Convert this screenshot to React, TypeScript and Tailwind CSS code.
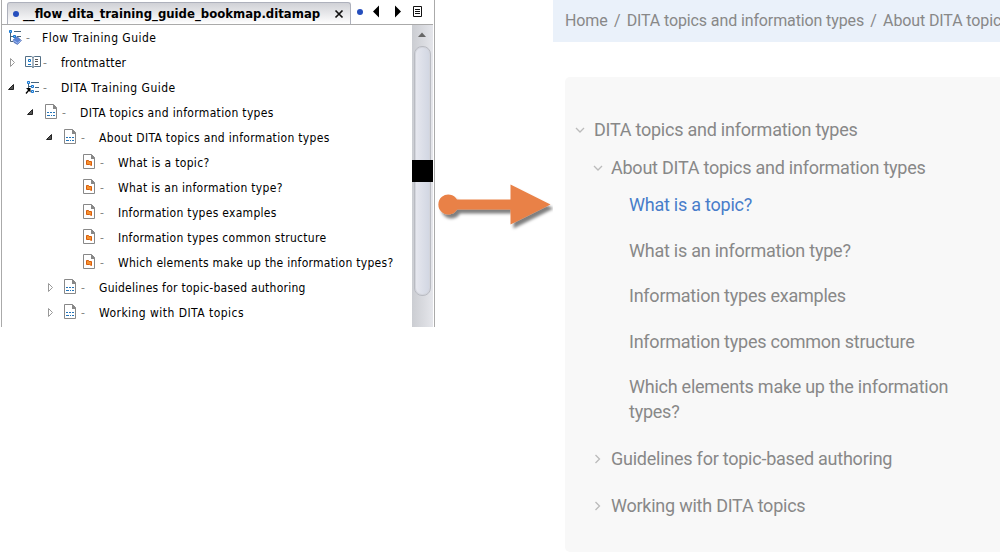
import React from "react";

type Kind = "map" | "book" | "ref" | "section" | "topic";
type Row = { label: string; indent: string; kind: Kind; state?: "open" | "closed"; track: string };

const rows: Row[] = [
  { label: "Flow Training Guide", indent: "pl-[6px]", kind: "map", track: "tracking-[0.46px]" },
  { label: "frontmatter", indent: "pl-[4px]", kind: "book", state: "closed", track: "tracking-[0.27px]" },
  { label: "DITA Training Guide", indent: "pl-[4px]", kind: "ref", state: "open", track: "tracking-[0.48px]" },
  { label: "DITA topics and information types", indent: "pl-[23px]", kind: "section", state: "open", track: "tracking-[0.33px]" },
  { label: "About DITA topics and information types", indent: "pl-[42px]", kind: "section", state: "open", track: "tracking-[0.32px]" },
  { label: "What is a topic?", indent: "pl-[80px]", kind: "topic", track: "tracking-[0.33px]" },
  { label: "What is an information type?", indent: "pl-[80px]", kind: "topic", track: "tracking-[0.3px]" },
  { label: "Information types examples", indent: "pl-[80px]", kind: "topic", track: "tracking-[0.29px]" },
  { label: "Information types common structure", indent: "pl-[80px]", kind: "topic", track: "tracking-[0.29px]" },
  { label: "Which elements make up the information types?", indent: "pl-[80px]", kind: "topic", track: "tracking-[0.28px]" },
  { label: "Guidelines for topic-based authoring", indent: "pl-[42px]", kind: "section", state: "closed", track: "tracking-[0.26px]" },
  { label: "Working with DITA topics", indent: "pl-[42px]", kind: "section", state: "closed", track: "tracking-[0.46px]" },
];

function Toggle({ open }: { open: boolean }) {
  return (
    <svg width="19" height="17" viewBox="0 0 19 17" className="shrink-0">
      {open ? (
        <path d="M7.5 5.5V10.5H2.5Z" fill="#555" stroke="#222" strokeWidth="1" />
      ) : (
        <path d="M4.5 4.5V12.5L8.5 8.5Z" fill="#fff" stroke="#999" />
      )}
    </svg>
  );
}

function NodeIcon({ kind }: { kind: Kind }) {
  if (kind === "section" || kind === "topic")
    return (
      <svg width="16" height="17" viewBox="0 0 16 17" className="shrink-0">
        <path d="M1.5 .5H9.5L12.5 3.5V14.5H1.5Z" fill="#fff" stroke="#888" />
        <path d="M9 0L13 4V5H9Z" fill="#888" />
        {kind === "section" ? (
          <path d="M3 8.5H5M6 8.5H8M9 8.5H11M3 11.5H6M7 11.5H8M9 11.5H11" stroke="#2474b8" />
        ) : (
          <path d="M4.5 6.5H6.5L7 7.5H9.5V11.5L7.5 10.5H4.5Z" fill="#f59331" stroke="#d95d0c" />
        )}
      </svg>
    );
  if (kind === "book")
    return (
      <svg width="16" height="17" viewBox="0 0 16 17" className="shrink-0">
        <path d="M.5 2.5H6.5L8 3.5L9.5 2.5H15.5V12.5H9.5L8 13.5L6.5 12.5H.5ZM8 3.5V13.5" fill="#fff" stroke="#536f86" />
        <path d="M3.5 5.5H5.5V7.5H3.5ZM3 10.5H6" fill="none" stroke="#1476c7" />
        <path d="M10 5.5H13M10 7.5H13M10 10.5H13" stroke="#555" />
      </svg>
    );
  if (kind === "map")
    return (
      <svg width="16" height="17" viewBox="0 0 16 17" className="shrink-0">
        <path d="M2.5 4V12.5H5M2.5 7.5H5M6 2.5H13M9 7.5H13" fill="none" stroke="#46637b" />
        <path d="M1.5 1.5H3.5V3.5H1.5ZM5.5 6.5H7.5V8.5H5.5Z" fill="#7ebbed" stroke="#1476d2" />
        <path d="M5 11L9 7.5L13.5 11.5L9.5 15.5L6 13.5Z" fill="#5b83d4" stroke="#365599" strokeWidth=".5" />
        <path d="M5.5 11.5L9.5 14L13 11.5" fill="none" stroke="#a4baf0" />
      </svg>
    );
  return (
    <svg width="16" height="17" viewBox="0 0 16 17" className="shrink-0">
      <path d="M3.5 5V7.5H6M3.5 7V9M6 3.5H14M10 8.5H14M10 12.5H14" fill="none" stroke="#46637b" />
      <path d="M2.5 2.5H4.5V4.5H2.5ZM6.5 6.5H8.5V8.5H6.5ZM6.5 11.5H8.5V13.5H6.5Z" fill="#c1def7" stroke="#1476d2" />
      <path d="M1 9H5.5V13.5L4 12L1.5 15L.5 14L3 11Z" fill="#000" />
    </svg>
  );
}

function TreeRow({ row }: { row: Row }) {
  return (
    <div className={`flex h-[25px] items-center ${row.indent}`}>
      {row.state && <Toggle open={row.state === "open"} />}
      <NodeIcon kind={row.kind} />
      <span className={`ml-[2px] shrink-0 text-[#888] ${row.kind === "map" ? "w-[16px]" : "w-[18px]"}`}>-</span>
      <span className={row.track}>{row.label}</span>
    </div>
  );
}

function Chevron({ down = false }: { down?: boolean }) {
  return (
    <svg width="10" height="10" viewBox="0 0 10 10" className="shrink-0" fill="none" stroke="#bbb" strokeWidth="1.3">
      <path d={down ? "M1 3L5 7L9 3" : "M2.5 1L6.5 5L2.5 9"} />
    </svg>
  );
}

function MapPanel() {
  return (
    <section className="ml-px flex h-[327px] w-[434px] shrink-0 flex-col border-x border-[#aaa] bg-white pr-px font-['DejaVu_Sans_Condensed','DejaVu_Sans',sans-serif] text-[12px] whitespace-nowrap text-black">
      <header className="flex h-[25px] shrink-0 border-b border-[#aaa] pt-[2px] pl-[5px]">
        <div className="flex h-[22px] w-[344px] shrink-0 items-center rounded-t-[3px] border border-b-0 border-[#aeb1bc] bg-linear-to-b from-[#d0d1d6] to-white pl-[5px]">
          <i className="size-[6px] shrink-0 rounded-full bg-[#254ebd]" />
          <span className="ml-[4px] w-[308px] shrink-0 text-[13px]/[18px] font-bold">__flow_dita_training_guide_bookmap.ditamap</span>
          <svg width="10" height="10" viewBox="0 0 10 10" className="ml-[3px] shrink-0"><path d="M1.5 1.5L8.5 8.5M8.5 1.5L1.5 8.5" stroke="#111" strokeWidth="1.7" /></svg>
        </div>
        <svg width="74" height="20" viewBox="0 0 74 20" className="ml-[4px] shrink-0">
          <circle cx="5" cy="10" r="3" fill="#254ebd" />
          <path d="M24 3.5V15.5L18 9.5ZM40 3.5V15.5L46 9.5Z" />
          <path d="M58.5 4.5H66.5V14.5H58.5ZM60 7.5H65M60 9.5H65M60 11.5H65" fill="none" stroke="#111" />
        </svg>
      </header>
      <div className="flex min-h-0 flex-1">
        <div className="min-w-0 flex-1">
          {rows.map((r) => <TreeRow key={r.label} row={r} />)}
        </div>
        <div className="flex w-[21px] shrink-0 flex-col items-center bg-linear-to-r from-[#cbcdd2] to-[#e5e6eb]">
          <svg width="21" height="21" className="shrink-0"><path d="M6 12H14L10 7.5Z" fill="#666" /></svg>
          <div className="flex h-[250px] w-[17px] shrink-0 justify-center rounded-[8px] border border-[#b9bbc2] bg-linear-to-r from-[#e7e8ef] to-[#d1d6e2] pt-[113px] shadow-[inset_0_0_0_1px_#d3d5dc]">
            <div className="h-[22px] w-[21px] shrink-0 bg-black" />
          </div>
        </div>
      </div>
    </section>
  );
}

export default function App() {
  return (
    <main className="flex h-[559px] w-[1000px] overflow-hidden bg-white">
      <MapPanel />
      <div className="w-[118px] shrink-0 pt-[180px]">
        <svg width="118" height="55" viewBox="0 0 118 55">
          <defs><filter id="shadow" x="-20%" y="-30%" width="140%" height="180%"><feDropShadow dx="3" dy="4" stdDeviation="1.8" floodColor="#000" floodOpacity=".5" /></filter></defs>
          <path d="M22 19.5H75.5V4.5L115.5 24.5L75.5 44.5V29.5H22A10 10 0 1 1 22 19.5Z" fill="#e98146" filter="url(#shadow)" />
        </svg>
      </div>
      <section className="w-[447px] shrink-0 font-[Roboto,sans-serif] whitespace-nowrap text-[#888]">
        <nav className="flex h-[42px] items-center bg-[#eaf1fa] pb-px pl-[12px] text-[16px] tracking-[-0.12px]">
          <span>Home</span><span className="mx-[6.3px]">/</span><span>DITA topics and information types</span><span className="mx-[6.3px]">/</span><span>About DITA topic</span>
        </nav>
        <div className="mt-[35px] ml-[12px] h-[475px] rounded-l-[5px] bg-[#f8f8f8] pt-[40px] text-[18px] leading-[25px] tracking-[-0.24px]">
          <div className="flex items-center gap-[9px] pl-[10px]"><Chevron down /><span>DITA topics and information types</span></div>
          <div className="mt-[13px] flex items-center gap-[8px] pl-[28px]"><Chevron down /><span>About DITA topics and information types</span></div>
          <div className="mt-[12px] flex flex-col gap-[20.5px] pl-[64px]">
            <span className="text-[#477dca]">What is a topic?</span>
            <span>What is an information type?</span>
            <span>Information types examples</span>
            <span>Information types common structure</span>
            <span>Which elements make up the information<br />types?</span>
          </div>
          <div className="mt-[22px] flex items-center gap-[8px] pl-[28px]"><Chevron /><span>Guidelines for topic-based authoring</span></div>
          <div className="mt-[22px] flex items-center gap-[8px] pl-[28px]"><Chevron /><span>Working with DITA topics</span></div>
        </div>
      </section>
    </main>
  );
}
